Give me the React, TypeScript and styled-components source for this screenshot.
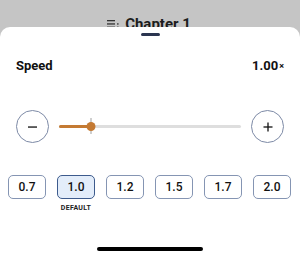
import React from "react";
import styled, { createGlobalStyle } from "styled-components";

const Global = createGlobalStyle`
  html, body { margin: 0; padding: 0; }
  body { font-family: Roboto, "Liberation Sans", Arial, sans-serif; background: #c5c5c5; }
  * { box-sizing: border-box; }
`;

const Page = styled.div`
  width: 300px;
  height: 257px;
  overflow: hidden;
  display: flex;
  flex-direction: column;
  background: #c5c5c5;
`;

const TopBar = styled.div`
  height: 27px;
  flex: none;
  overflow: hidden;
  display: flex;
  justify-content: center;
  align-items: flex-start;
  padding-top: 14px;
  gap: 6px;
  padding-right: 2px;
`;

const Title = styled.span`
  font-size: 15px;
  line-height: 20px;
  font-weight: 700;
  color: #1c1c1c;
`;

const TitleIcon = styled.svg`
  margin-top: 6px;
  flex: none;
`;

const Sheet = styled.div`
  flex: 1;
  background: #ffffff;
  border-radius: 10px 10px 0 0;
  display: flex;
  flex-direction: column;
  padding-bottom: 6px;
`;

const Handle = styled.div`
  width: 19px;
  height: 3px;
  border-radius: 2px;
  background: #2b3550;
  margin: 6px auto 0;
`;

const HeaderRow = styled.div`
  display: flex;
  justify-content: space-between;
  align-items: baseline;
  margin-top: 22px;
  padding: 0 16px;
  line-height: 16px;
`;

const Label = styled.span`
  font-size: 13px;
  font-weight: 700;
  color: #111;
`;

const Value = styled.span`
  font-size: 13px;
  font-weight: 700;
  color: #111;
  display: flex;
  align-items: baseline;
`;

const Times = styled.span`
  font-size: 9px;
  margin-left: 1px;
  position: relative;
  top: -1px;
`;

const SliderRow = styled.div`
  display: flex;
  align-items: center;
  gap: 10px;
  margin-top: 35px;
  padding: 0 16px;
`;

const RoundButton = styled.button`
  width: 33px;
  height: 33px;
  flex: none;
  border-radius: 50%;
  border: 1px solid #7d8aa6;
  background: #fff;
  padding: 0;
  display: flex;
  align-items: center;
  justify-content: center;
  color: #111;
`;

const Track = styled.div`
  position: relative;
  flex: 1;
  height: 3px;
  background: #dedede;
  border-radius: 2px;
`;

const Fill = styled.div`
  position: absolute;
  left: 0;
  top: 0;
  bottom: 0;
  background: #c47a33;
  border-radius: 2px;
`;

const Tick = styled.div`
  position: absolute;
  width: 1px;
  height: 16px;
  top: -7px;
  background: #a0a0a0;
  transform: translateX(-50%);
`;

const Thumb = styled.div`
  position: absolute;
  width: 9px;
  height: 9px;
  top: -3px;
  border-radius: 50%;
  background: #c47a33;
  transform: translateX(-50%);
`;

const Presets = styled.div`
  display: flex;
  justify-content: space-between;
  align-items: flex-start;
  margin-top: 32px;
  padding: 0 9px 0 8px;
`;

const Option = styled.div`
  display: flex;
  flex-direction: column;
  align-items: center;
  width: 38px;
`;

const Preset = styled.button<{ $active?: boolean }>`
  width: 38px;
  height: 24px;
  border-radius: 5px;
  border: 1.2px solid ${(p) => (p.$active ? "#3d5b8d" : "#8595b3")};
  background: ${(p) => (p.$active ? "#e3edfa" : "#ffffff")};
  font-family: Roboto, "Liberation Sans", Arial, sans-serif;
  font-size: 12px;
  font-weight: 500;
  color: #111;
  padding: 0;
`;

const DefaultLabel = styled.span`
  margin-top: 5px;
  font-size: 7px;
  font-weight: 700;
  letter-spacing: 0.3px;
  color: #222;
  white-space: nowrap;
`;

const HomeIndicator = styled.div`
  margin: auto auto 0;
  width: 106px;
  height: 4px;
  border-radius: 2px;
  background: #000;
`;

const presets = ["0.7", "1.0", "1.2", "1.5", "1.7", "2.0"];

export default function App() {
  const pct = (91 - 59) / (241 - 59);
  return (
    <>
      <Global />
      <Page>
        <TopBar>
          <TitleIcon width="12" height="8" viewBox="0 0 12 8">
            <rect x="0" y="0" width="8" height="1.3" fill="#333" />
            <rect x="0" y="3.3" width="8" height="1.3" fill="#333" />
            <rect x="0" y="6.6" width="8" height="1.3" fill="#333" />
            <rect x="10" y="3.3" width="1.6" height="1.3" fill="#333" />
            <rect x="10" y="6.6" width="1.6" height="1.3" fill="#333" />
          </TitleIcon>
          <Title>Chapter 1</Title>
        </TopBar>
        <Sheet>
          <Handle />
          <HeaderRow>
            <Label>Speed</Label>
            <Value>
              1.00<Times>×</Times>
            </Value>
          </HeaderRow>
          <SliderRow>
            <RoundButton aria-label="Slower">
              <svg width="10" height="2" viewBox="0 0 10 2">
                <rect x="0" y="0.4" width="9" height="1.3" fill="#111" />
              </svg>
            </RoundButton>
            <Track>
              <Fill style={{ width: `${pct * 100}%` }} />
              <Tick style={{ left: `${pct * 100}%` }} />
              <Thumb style={{ left: `${pct * 100}%` }} />
            </Track>
            <RoundButton aria-label="Faster">
              <svg width="10" height="10" viewBox="0 0 10 10">
                <rect x="0.5" y="4.35" width="9" height="1.3" fill="#111" />
                <rect x="4.35" y="0.5" width="1.3" height="9" fill="#111" />
              </svg>
            </RoundButton>
          </SliderRow>
          <Presets>
            {presets.map((p) => (
              <Option key={p}>
                <Preset $active={p === "1.0"}>{p}</Preset>
                {p === "1.0" && <DefaultLabel>DEFAULT</DefaultLabel>}
              </Option>
            ))}
          </Presets>
          <HomeIndicator />
        </Sheet>
      </Page>
    </>
  );
}
